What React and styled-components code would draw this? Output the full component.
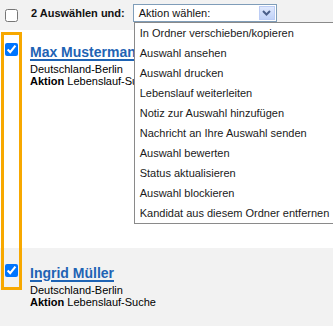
import React from "react";
import styled, { createGlobalStyle } from "styled-components";

const Global = createGlobalStyle`
  html, body { margin: 0; padding: 0; background: #fff; }
  body { font-family: "Liberation Sans", Arial, sans-serif; width: 333px; overflow: hidden; }
`;

const Toolbar = styled.div`
  display: flex;
  align-items: flex-start;
  height: 30px;
  box-sizing: border-box;
  padding-top: 4px;
  background: #f2f2f2;
`;

const Check = styled.input.attrs({ type: "checkbox" })`
  width: 13px;
  height: 13px;
  margin: ${(p) => p.$top || 0}px ${(p) => p.$right || 12}px 0 5px;
  flex: none;
`;

const BulkLabel = styled.span`
  font-size: 11px;
  font-weight: bold;
  line-height: 19px;
  color: #111;
  margin-right: 8px;
`;

const Select = styled.div`
  position: relative;
  display: flex;
  align-items: center;
  justify-content: space-between;
  width: 144px;
  height: 18px;
  box-sizing: border-box;
  border: 1px solid #7f9db9;
  background: #fff;
  padding: 0 1px 0 5px;
`;

const SelectText = styled.span`
  font-size: 11px;
  line-height: 16px;
  color: #111;
`;

const ArrowBtn = styled.span`
  display: flex;
  align-items: center;
  justify-content: center;
  width: 16px;
  height: 14px;
  box-sizing: border-box;
  border: 1px solid #bccdf5;
  background: linear-gradient(#dfe8fd, #c0d2f8);
`;

const Menu = styled.ul`
  position: absolute;
  left: 0;
  top: 17px;
  width: 201px;
  margin: 0;
  padding: 0;
  list-style: none;
  box-sizing: border-box;
  border: 1px solid #8a8a8a;
  background: #fff;
  z-index: 5;
`;

const MenuItem = styled.li`
  height: 20px;
  line-height: 20px;
  padding-left: 5px;
  font-size: 11px;
  color: #1a1a1a;
  white-space: nowrap;
`;

const List = styled.div`
  position: relative;
`;

const Row = styled.div`
  display: flex;
  align-items: flex-start;
  box-sizing: border-box;
  height: ${(p) => p.$height}px;
  padding-top: ${(p) => p.$pad}px;
  background: ${(p) => (p.$alt ? "#f2f2f2" : "#fff")};
`;

const Info = styled.div`
  display: flex;
  flex-direction: column;
  margin-top: 1px;
`;

const Name = styled.a`
  font-size: 14px;
  font-weight: bold;
  line-height: 17px;
  color: #1e63b4;
  text-decoration: underline;
  text-decoration-thickness: 2px;
  text-underline-offset: 2px;
  white-space: nowrap;
`;

const Detail = styled.div`
  font-size: 11px;
  line-height: 12px;
  color: #000;
  white-space: nowrap;
  &:first-of-type { margin-top: 2px; }
`;

const SelectionFrame = styled.div`
  position: absolute;
  left: 1px;
  top: 2px;
  width: 21px;
  height: 258px;
  box-sizing: border-box;
  border: 3px solid #f7a800;
  pointer-events: none;
`;

const actions = [
  "In Ordner verschieben/kopieren",
  "Auswahl ansehen",
  "Auswahl drucken",
  "Lebenslauf weiterleiten",
  "Notiz zur Auswahl hinzufügen",
  "Nachricht an Ihre Auswahl senden",
  "Auswahl bewerten",
  "Status aktualisieren",
  "Auswahl blockieren",
  "Kandidat aus diesem Ordner entfernen",
];

const candidates = [
  { name: "Max Mustermann", height: 218, pad: 13 },
  { name: "Ingrid Müller", height: 78, pad: 16, alt: true },
];

export default function App() {
  return (
    <>
      <Global />
      <Toolbar>
        <Check $top={5} $right={13} />
        <BulkLabel>2 Auswählen und:</BulkLabel>
        <Select>
          <SelectText>Aktion wählen:</SelectText>
          <ArrowBtn>
            <svg width="9" height="6" viewBox="0 0 9 6">
              <polyline points="1,1 4.5,4.5 8,1" fill="none" stroke="#4a5f8a" strokeWidth="2" />
            </svg>
          </ArrowBtn>
          <Menu>
            {actions.map((a) => (
              <MenuItem key={a}>{a}</MenuItem>
            ))}
          </Menu>
        </Select>
      </Toolbar>
      <List>
        {candidates.map((c) => (
          <Row key={c.name} $height={c.height} $pad={c.pad} $alt={c.alt}>
            <Check defaultChecked $top={0} $right={12} />
            <Info>
              <Name href="#">{c.name}</Name>
              <Detail>Deutschland-Berlin</Detail>
              <Detail>
                <b>Aktion</b> Lebenslauf-Suche
              </Detail>
            </Info>
          </Row>
        ))}
        <SelectionFrame />
      </List>
    </>
  );
}
